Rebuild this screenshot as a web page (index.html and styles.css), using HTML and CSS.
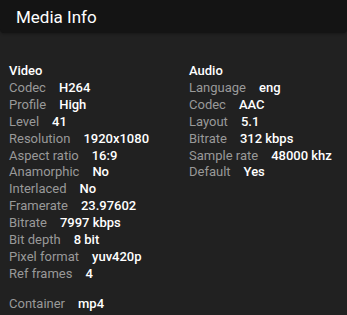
FILE: index.html
```html
<!DOCTYPE html>
<html>

<head>
    <title>Media Info</title>
    <link rel="stylesheet" href="styles.css">
</head>

<body>

    <div class="header">
        <h3 class="title">Media Info</h3>
    </div>

    <div class="content">
        <div class="streams">
            <div class="stream stream-video">
                <div class="stream-type">Video</div>
                <div><span class="label">Codec</span><span class="value">H264</span></div>
                <div><span class="label">Profile</span><span class="value">High</span></div>
                <div><span class="label">Level</span><span class="value">41</span></div>
                <div><span class="label">Resolution</span><span class="value">1920x1080</span></div>
                <div><span class="label">Aspect ratio</span><span class="value">16:9</span></div>
                <div><span class="label">Anamorphic</span><span class="value">No</span></div>
                <div><span class="label">Interlaced</span><span class="value">No</span></div>
                <div><span class="label">Framerate</span><span class="value">23.97602</span></div>
                <div><span class="label">Bitrate</span><span class="value">7997 kbps</span></div>
                <div><span class="label">Bit depth</span><span class="value">8 bit</span></div>
                <div><span class="label">Pixel format</span><span class="value">yuv420p</span></div>
                <div><span class="label">Ref frames</span><span class="value">4</span></div>
            </div>
            <div class="stream">
                <div class="stream-type">Audio</div>
                <div><span class="label">Language</span><span class="value">eng</span></div>
                <div><span class="label">Codec</span><span class="value">AAC</span></div>
                <div><span class="label">Layout</span><span class="value">5.1</span></div>
                <div><span class="label">Bitrate</span><span class="value">312 kbps</span></div>
                <div><span class="label">Sample rate</span><span class="value">48000 khz</span></div>
                <div><span class="label">Default</span><span class="value">Yes</span></div>
            </div>
        </div>

        <div class="container-row"><span class="label">Container</span><span class="value">mp4</span></div>
    </div>

</body>

</html>
```

FILE: styles.css
```css
body {
    margin: 0;
    font-family: Roboto, sans-serif;
    background-color: #212121;
    color: #fff;
}

.header {
    height: 33px;
    background-color: #141414;
    border-radius: 0 0 4px 4px;
    box-shadow: 0 1px 3px rgba(0, 0, 0, 0.3);
    display: flex;
    align-items: center;
    padding-left: 16px;
}

.title {
    margin: 0;
    font-size: 17px;
    font-weight: 400;
    color: #fff;
}

.content {
    padding: 30px 9px 0 9px;
    font-size: 13px;
    line-height: 16.9px;
}

.streams {
    display: flex;
}

.stream-video {
    width: 180px;
}

.stream-type {
    font-weight: 500;
}

.label {
    color: #999;
    margin-right: 13px;
}

.value {
    font-weight: 500;
}

.container-row {
    margin-top: 13px;
}
```
